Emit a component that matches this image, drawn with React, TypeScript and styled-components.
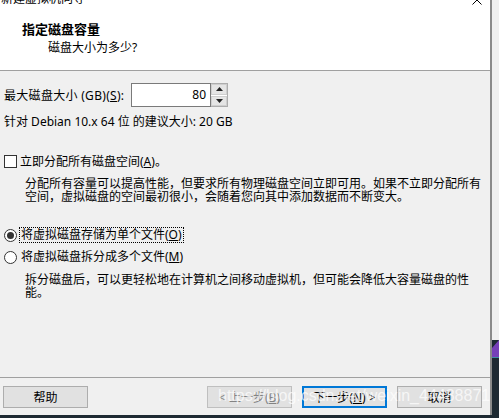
import React from "react";
import styled, { createGlobalStyle } from "styled-components";

const GlobalStyle = createGlobalStyle`
  html, body {
    margin: 0;
    padding: 0;
    background: #1e2a33;
  }
`;

const Screen = styled.div`
  position: relative;
  width: 499px;
  height: 418px;
  overflow: hidden;
  display: flex;
  align-items: flex-start;
  background: #1e2a33;
`;

const Dialog = styled.div`
  width: 492px;
  height: 415px;
  box-sizing: border-box;
  border-right: 2px solid #8a8a8a;
  background: #f0f0f0;
  display: flex;
  flex-direction: column;
  font-family: "Noto Sans", "Noto Sans CJK SC", sans-serif;
  font-size: 12px;
  color: #000;
`;

const TitleBar = styled.div`
  height: 5px;
  flex-shrink: 0;
  overflow: hidden;
  background: #fff;
  display: flex;
  align-items: flex-end;
  justify-content: space-between;
  padding: 0 8px 0 1px;
`;

const TitleText = styled.span`
  font-size: 12px;
  line-height: 12px;
  white-space: nowrap;
  flex-shrink: 0;
`;

const Header = styled.div`
  height: 66px;
  flex-shrink: 0;
  box-sizing: border-box;
  background: #fff;
  border-bottom: 1px solid #a0a0a0;
  padding: 16px 0 0 22px;
`;

const HeaderTitle = styled.div`
  font-size: 13px;
  font-weight: bold;
  line-height: 17px;
`;

const HeaderSub = styled.div`
  margin: 2px 0 0 26px;
  line-height: 16px;
`;

const Body = styled.div`
  flex: 1;
  padding: 12px 0 0 4px;
`;

const SizeRow = styled.div`
  display: flex;
  align-items: center;
  gap: 4px;
  height: 24px;
`;

const SizeLabel = styled.span`
  width: 123px;
  white-space: nowrap;
  letter-spacing: 0.3px;
`;

const Spin = styled.div`
  display: flex;
  height: 24px;
`;

const SpinInput = styled.div`
  width: 80px;
  box-sizing: border-box;
  border: 1px solid #7a7a7a;
  background: #fff;
  text-align: right;
  padding-right: 4px;
  line-height: 22px;
`;

const SpinButtons = styled.div`
  width: 17px;
  box-sizing: border-box;
  border: 1px solid #adadad;
  border-left: none;
  display: flex;
  flex-direction: column;
  gap: 1px;
  background: #fff;
`;

const SpinButton = styled.div`
  flex: 1;
  background: #e5e5e5;
  border: 1px solid #cfcfcf;
  display: flex;
  align-items: center;
  justify-content: center;
`;

const Line = styled.div<{ $top: number }>`
  margin-top: ${(p) => p.$top}px;
  line-height: 16px;
  white-space: nowrap;
`;

const OptionRow = styled.div<{ $top: number; $gap: number }>`
  margin-top: ${(p) => p.$top}px;
  height: 16px;
  display: flex;
  align-items: center;
  gap: ${(p) => p.$gap}px;
  white-space: nowrap;
`;

const CheckBox = styled.span`
  width: 13px;
  height: 13px;
  box-sizing: border-box;
  border: 1px solid #333;
  background: #fff;
  flex-shrink: 0;
`;

const Radio = styled.span<{ $checked?: boolean }>`
  width: 13px;
  height: 13px;
  box-sizing: border-box;
  border-radius: 50%;
  border: 1px solid #333;
  background: #fff;
  flex-shrink: 0;
  display: flex;
  align-items: center;
  justify-content: center;

  &::after {
    content: "";
    width: 7px;
    height: 7px;
    border-radius: 50%;
    background: ${(p) => (p.$checked ? "#333" : "transparent")};
  }
`;

const OptionLabel = styled.span<{ $focused?: boolean }>`
  line-height: 14px;
  padding: 0 1px;
  border: 1px dotted ${(p) => (p.$focused ? "#000" : "transparent")};
`;

const Desc = styled.div`
  margin-top: 8px;
  padding-left: 21px;
  line-height: 13px;
  white-space: nowrap;
`;

const Footer = styled.div`
  flex-shrink: 0;
  border-top: 1px solid #a0a0a0;
  padding: 8px 8px 7px 3px;
  display: flex;
  justify-content: space-between;
`;

const ButtonGroup = styled.div`
  display: flex;
  gap: 10px;
`;

const Button = styled.button<{ $primary?: boolean }>`
  width: 85px;
  height: 22px;
  box-sizing: border-box;
  padding: 0;
  background: #e1e1e1;
  border: ${(p) => (p.$primary ? "2px solid #0078d7" : "1px solid #adadad")};
  font-family: "Noto Sans", "Noto Sans CJK SC", sans-serif;
  font-size: 12px;
  color: #000;

  &:disabled {
    border-color: #bfbfbf;
    color: #838383;
  }
`;

const Desktop = styled.div`
  flex: 1;
  height: 418px;
  display: flex;
  flex-direction: column;
`;

const DesktopWindow = styled.div`
  height: 340px;
  background: #efefef;
`;

const Watermark = styled.div`
  position: absolute;
  left: 218px;
  top: 387px;
  font-family: "Liberation Sans", Arial, sans-serif;
  font-size: 16px;
  line-height: 18px;
  color: rgba(255, 255, 255, 0.72);
  white-space: nowrap;
  pointer-events: none;
`;

const Triangle = ({ up }: { up: boolean }) => (
  <svg width="7" height="4" viewBox="0 0 7 4">
    <polygon points={up ? "3.5,0 7,4 0,4" : "0,0 7,0 3.5,4"} fill="#222" />
  </svg>
);

export default function App() {
  return (
    <>
      <GlobalStyle />
      <Screen>
        <Dialog>
          <TitleBar>
            <TitleText>新建虚拟机向导</TitleText>
            <svg width="10" height="10" viewBox="0 0 10 10" style={{ flexShrink: 0 }}>
              <path d="M0.5 0.5 L9.5 9.5 M9.5 0.5 L0.5 9.5" stroke="#000" strokeWidth="1" />
            </svg>
          </TitleBar>
          <Header>
            <HeaderTitle>指定磁盘容量</HeaderTitle>
            <HeaderSub>磁盘大小为多少?</HeaderSub>
          </Header>
          <Body>
            <SizeRow>
              <SizeLabel>
                最大磁盘大小 (GB)(<u>S</u>):
              </SizeLabel>
              <Spin>
                <SpinInput>80</SpinInput>
                <SpinButtons>
                  <SpinButton>
                    <Triangle up />
                  </SpinButton>
                  <SpinButton>
                    <Triangle up={false} />
                  </SpinButton>
                </SpinButtons>
              </Spin>
            </SizeRow>
            <Line $top={7}>针对 Debian 10.x 64 位 的建议大小: 20 GB</Line>

            <OptionRow $top={23} $gap={3}>
              <CheckBox />
              <span>
                立即分配所有磁盘空间(<u>A</u>)。
              </span>
            </OptionRow>
            <Desc>
              分配所有容量可以提高性能，但要求所有物理磁盘空间立即可用。如果不立即分配所有
              <br />
              空间，虚拟磁盘的空间最初很小，会随着您向其中添加数据而不断变大。
            </Desc>

            <OptionRow $top={24} $gap={2}>
              <Radio $checked />
              <OptionLabel $focused>
                将虚拟磁盘存储为单个文件(<u>O</u>)
              </OptionLabel>
            </OptionRow>
            <OptionRow $top={6} $gap={2}>
              <Radio />
              <OptionLabel>
                将虚拟磁盘拆分成多个文件(<u>M</u>)
              </OptionLabel>
            </OptionRow>
            <Desc>
              拆分磁盘后，可以更轻松地在计算机之间移动虚拟机，但可能会降低大容量磁盘的性
              <br />
              能。
            </Desc>
          </Body>
          <Footer>
            <Button>帮助</Button>
            <ButtonGroup>
              <Button disabled>
                &lt; 上一步(<u>B</u>)
              </Button>
              <Button $primary>
                下一步(<u>N</u>) &gt;
              </Button>
              <Button>取消</Button>
            </ButtonGroup>
          </Footer>
        </Dialog>
        <Desktop>
          <DesktopWindow />
          <svg width="7" height="18" viewBox="0 0 7 18">
            <polygon points="0,8 7,0 7,17 0,17" fill="#7640b8" />
            <rect x="0" y="17" width="7" height="1" fill="#3d8da3" />
          </svg>
        </Desktop>
        <Watermark>https://blog.csdn.net/weixin_44488871</Watermark>
      </Screen>
    </>
  );
}
